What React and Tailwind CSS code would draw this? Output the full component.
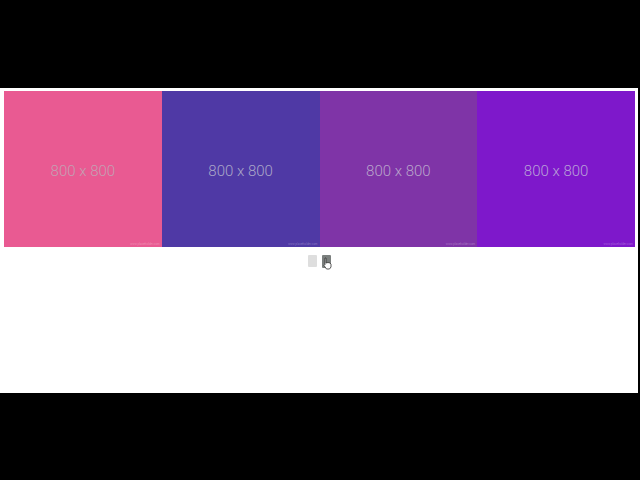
import React from "react";

const slides = [
  { bg: "bg-[#e95a92]", text: "text-[#c4a0b2]" },
  { bg: "bg-[#4f39a5]", text: "text-[#aaa6c8]" },
  { bg: "bg-[#7f34a7]", text: "text-[#b9a3cb]" },
  { bg: "bg-[#7e18cb]", text: "text-[#b9a0d8]" },
];

export default function App() {
  return (
    <div className="w-[640px] h-[480px] bg-black flex flex-col pt-[88px] font-['Roboto',sans-serif]">
      <div className="w-[638px] h-[305px] bg-white flex flex-col pt-[3px] pl-[4px]">
        <div className="flex w-[631px] h-[156px]">
          {slides.map((s, i) => (
            <div
              key={i}
              className={`relative flex-1 flex items-center justify-center pt-[4px] ${s.bg}`}
            >
              <span className={`text-[15px] font-light ${s.text}`}>800 x 800</span>
              <span className="absolute right-[2px] bottom-[1px] text-[3px] text-white/30 leading-none">
                www.placeholder.com
              </span>
            </div>
          ))}
        </div>
        <div className="flex justify-center gap-[5px] mt-[8px] w-[631px]">
          <div className="w-[9px] h-[12px] bg-[#dedede] rounded-[1px]" />
          <div className="relative w-[9px] h-[13px] bg-[#7b7f7e] rounded-[1px]">
            <svg
              className="absolute left-[1px] top-[2px]"
              width="10"
              height="13"
              viewBox="0 0 10 13"
            >
              <path
                d="M2 1 L3 1 L3 6 L5 5.5 L7 6 L8 7 L8 10 L6.5 12 L3.5 12 L1 8.5 L2 7.5 L2 1 Z"
                fill="white"
                stroke="#333"
                strokeWidth="0.8"
              />
            </svg>
          </div>
        </div>
      </div>
    </div>
  );
}
